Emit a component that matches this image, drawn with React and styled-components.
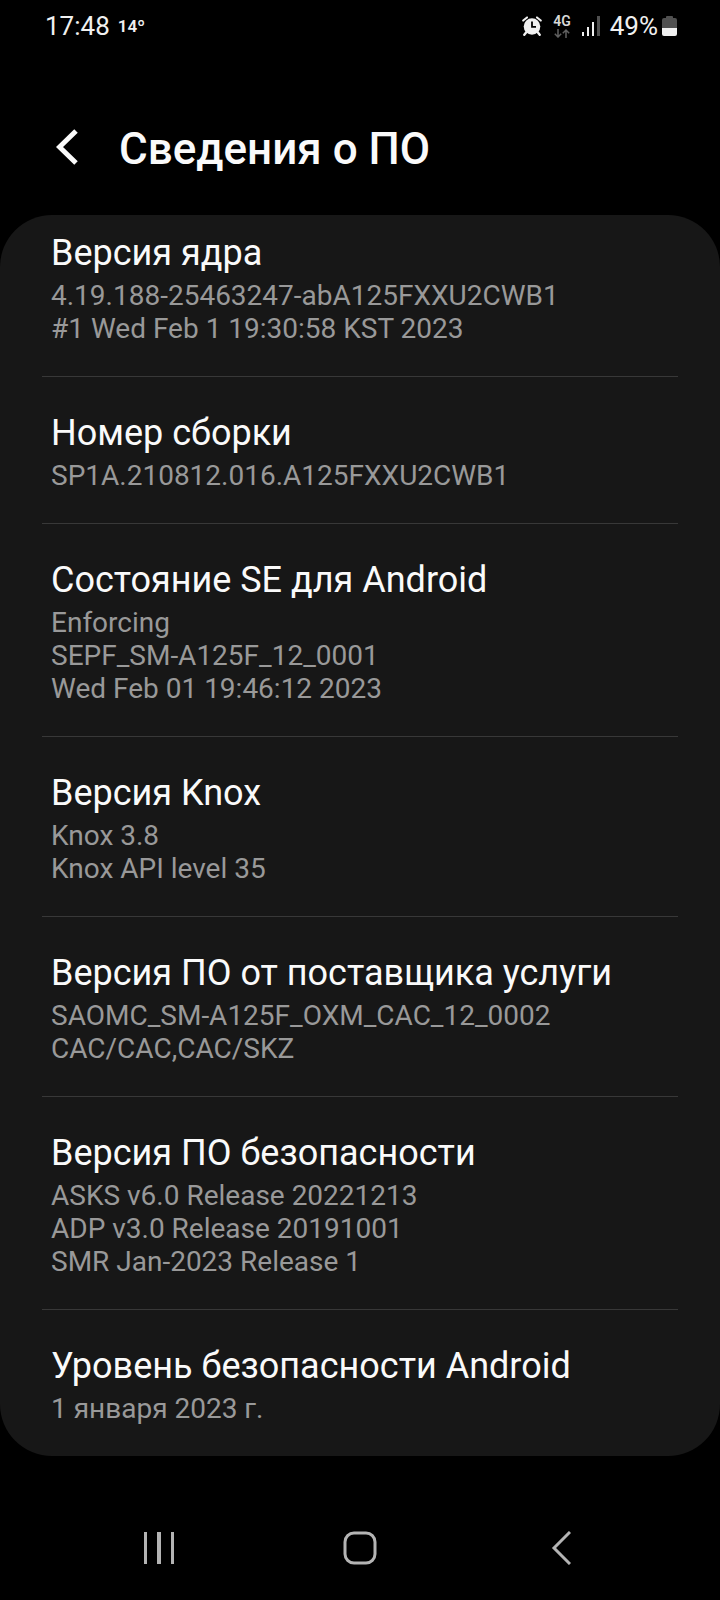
import styled, {createGlobalStyle} from 'styled-components';

const GlobalStyle = createGlobalStyle`
  * {
    box-sizing: border-box;
  }

  body {
    margin: 0;
    background: #000000;
    color: #fafafa;
    font-family: Roboto, "Noto Sans", sans-serif;
  }
`

const StScreen = styled.div`
  display: flex;
  flex-direction: column;
  min-height: 100vh;
`

const StStatusBar = styled.div`
  display: flex;
  justify-content: space-between;
  align-items: center;
  height: 52px;
  padding: 0 43px 0 45px;
`

const StStatusGroup = styled.div`
  display: flex;
  align-items: center;
  gap: ${({gap}) => gap};

  svg {
    display: block;
  }
`

const StStatusText = styled.span`
  font-size: 26px;
  line-height: 32px;
  color: #f0f0f0;
`

const StTemperature = styled.span`
  font-size: 17px;
  line-height: 20px;
  font-weight: 600;
  color: #f0f0f0;
`

const StNetwork = styled.div`
  display: flex;
  flex-direction: column;
  align-items: center;
  padding: 0 1px;
  font-size: 14px;
  line-height: 13px;
  font-weight: 600;
  color: #d8d8d8;
`

const StBattery = styled.div`
  display: flex;
  align-items: center;
  gap: 4px;
`

const StHeader = styled.header`
  display: flex;
  align-items: center;
  gap: 27px;
  padding: 67px 42px 36px;

  h1 {
    margin: 0;
    font-size: 44px;
    line-height: 60px;
    font-weight: 500;
  }
`

const StIconButton = styled.button`
  display: flex;
  align-items: center;
  justify-content: center;
  width: 50px;
  height: 60px;
  padding: 0;
  border: none;
  background: none;
  color: ${({color}) => color || '#fafafa'};
  cursor: pointer;
`

const StCard = styled.main`
  padding: 0 42px;
  border-radius: 52px;
  background: #171717;
`

const StItem = styled.section`
  padding: 35px 9px 31px;
  border-top: 1px solid #383838;

  &:first-child {
    padding-top: 17px;
    border-top: none;
  }

  h2 {
    margin: 0 0 5px;
    font-size: 36px;
    line-height: 42px;
    font-weight: 400;
  }

  p {
    margin: 0;
    font-size: 28px;
    line-height: 33px;
    color: #999999;
  }
`

const StNavigation = styled.nav`
  display: flex;
  justify-content: center;
  gap: 151px;
  margin-top: auto;
  padding: 0 42px 22px;
`

const items = [
    {title: 'Версия ядра', lines: ['4.19.188-25463247-abA125FXXU2CWB1', '#1 Wed Feb 1 19:30:58 KST 2023']},
    {title: 'Номер сборки', lines: ['SP1A.210812.016.A125FXXU2CWB1']},
    {title: 'Состояние SE для Android', lines: ['Enforcing', 'SEPF_SM-A125F_12_0001', 'Wed Feb 01 19:46:12 2023']},
    {title: 'Версия Knox', lines: ['Knox 3.8', 'Knox API level 35']},
    {title: 'Версия ПО от поставщика услуги', lines: ['SAOMC_SM-A125F_OXM_CAC_12_0002', 'CAC/CAC,CAC/SKZ']},
    {title: 'Версия ПО безопасности', lines: ['ASKS v6.0 Release 20221213', 'ADP v3.0 Release 20191001', 'SMR Jan-2023 Release 1']},
    {title: 'Уровень безопасности Android', lines: ['1 января 2023 г.']},
]

const AlarmIcon = () => <svg width="20" height="20" viewBox="0 0 20 20" fill="none">
    <path d="M1.2 4.6L5 1.4M18.8 4.6L15 1.4" stroke="#f0f0f0" strokeWidth="2" strokeLinecap="round"/>
    <path d="M4.5 16L2.3 18.7M15.5 16L17.7 18.7" stroke="#f0f0f0" strokeWidth="2.4" strokeLinecap="round"/>
    <circle cx="10" cy="10.5" r="8.3" fill="#f0f0f0"/>
    <path d="M10 5.5V10.8H14" stroke="#000000" strokeWidth="1.8"/>
</svg>

const DataIcon = () => <svg width="16" height="10" viewBox="0 0 16 10" fill="none" stroke="#606060" strokeWidth="1.5">
    <path d="M4 1V9M0.8 5.8L4 9L7.2 5.8"/>
    <path d="M12 10V2M8.8 5.2L12 2L15.2 5.2"/>
</svg>

const SignalIcon = () => <svg width="18" height="20" viewBox="0 0 18 20" fill="#f0f0f0">
    <rect x="0" y="16" width="2" height="4"/>
    <rect x="5" y="11" width="2" height="9"/>
    <rect x="10" y="6" width="2" height="14"/>
    <rect x="15" y="0" width="3" height="20" fill="#505050"/>
</svg>

const BatteryIcon = () => <svg width="15" height="20" viewBox="0 0 15 20">
    <path d="M4 2V1Q4 0 5 0H10Q11 0 11 1V2H13Q15 2 15 4V12H0V4Q0 2 2 2Z" fill="#505050"/>
    <path d="M0 12H15V18Q15 20 13 20H2Q0 20 0 18Z" fill="#f0f0f0"/>
</svg>

const BackIcon = () => <svg width="22" height="40" viewBox="0 0 22 40" fill="none" stroke="currentColor" strokeWidth="5">
    <path d="M20 2L3.5 18L20 34"/>
</svg>

const RecentsIcon = () => <svg width="30" height="32" viewBox="0 0 30 32" fill="currentColor">
    <rect x="0" y="0" width="3" height="32"/>
    <rect x="13" y="0" width="4" height="32"/>
    <rect x="27" y="0" width="3" height="32"/>
</svg>

const HomeIcon = () => <svg width="34" height="34" viewBox="0 0 34 34" fill="none" stroke="currentColor" strokeWidth="3">
    <rect x="2" y="2" width="30" height="30" rx="9"/>
</svg>

const NavBackIcon = () => <svg width="20" height="34" viewBox="0 0 20 34" fill="none" stroke="currentColor" strokeWidth="3">
    <path d="M19 1L3 17L19 33"/>
</svg>

const StatusBar = () => {
    return <StStatusBar>
        <StStatusGroup gap="8px">
            <StStatusText>17:48</StStatusText>
            <StTemperature>14º</StTemperature>
        </StStatusGroup>
        <StStatusGroup gap="10px">
            <AlarmIcon/>
            <StNetwork>
                <span>4G</span>
                <DataIcon/>
            </StNetwork>
            <SignalIcon/>
            <StBattery>
                <StStatusText>49%</StStatusText>
                <BatteryIcon/>
            </StBattery>
        </StStatusGroup>
    </StStatusBar>
}

const Item = ({title, lines}) => {
    return <StItem>
        <h2>{title}</h2>
        {lines.map(line => <p key={line}>{line}</p>)}
    </StItem>
}

export default function App() {
    return <StScreen>
        <GlobalStyle/>
        <StatusBar/>
        <StHeader>
            <StIconButton type="button" aria-label="Назад"><BackIcon/></StIconButton>
            <h1>Сведения о ПО</h1>
        </StHeader>
        <StCard>
            {items.map(item => <Item key={item.title} {...item}/>)}
        </StCard>
        <StNavigation>
            <StIconButton type="button" color="#b4b4b4" aria-label="Недавние"><RecentsIcon/></StIconButton>
            <StIconButton type="button" color="#b4b4b4" aria-label="Главный экран"><HomeIcon/></StIconButton>
            <StIconButton type="button" color="#b4b4b4" aria-label="Назад"><NavBackIcon/></StIconButton>
        </StNavigation>
    </StScreen>
}
